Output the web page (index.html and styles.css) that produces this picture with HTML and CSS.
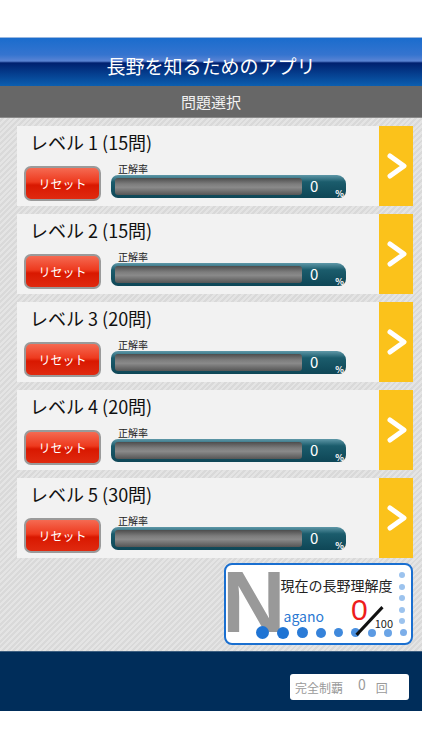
FILE: index.html
```html
<!DOCTYPE html>
<html lang="ja">
<head>
    <meta charset="UTF-8">
    <meta name="viewport" content="width=device-width, initial-scale=1.0">
    <title>長野を知るためのアプリ</title>
    <link rel="stylesheet" href="styles.css">
</head>
<body>
    <div class="status"></div>
    <header class="title-bar">長野を知るためのアプリ</header>
    <div class="sub-bar">問題選択</div>

    <main class="levels">
        <div class="level">
            <div class="level-body">
                <div class="level-name">レベル 1 (15問)</div>
                <button class="reset">リセット</button>
                <div class="rate">
                    <span class="rate-label">正解率</span>
                    <div class="meter">
                        <div class="track"></div>
                        <div class="value">0<small>%</small></div>
                    </div>
                </div>
            </div>
            <a class="go" href="#"><svg width="20" height="26" viewBox="0 0 20 26"><polyline points="3,3 17,13 3,23" fill="none" stroke="#fff" stroke-width="5" stroke-linecap="round" stroke-linejoin="round"/></svg></a>
        </div>
        <div class="level">
            <div class="level-body">
                <div class="level-name">レベル 2 (15問)</div>
                <button class="reset">リセット</button>
                <div class="rate">
                    <span class="rate-label">正解率</span>
                    <div class="meter">
                        <div class="track"></div>
                        <div class="value">0<small>%</small></div>
                    </div>
                </div>
            </div>
            <a class="go" href="#"><svg width="20" height="26" viewBox="0 0 20 26"><polyline points="3,3 17,13 3,23" fill="none" stroke="#fff" stroke-width="5" stroke-linecap="round" stroke-linejoin="round"/></svg></a>
        </div>
        <div class="level">
            <div class="level-body">
                <div class="level-name">レベル 3 (20問)</div>
                <button class="reset">リセット</button>
                <div class="rate">
                    <span class="rate-label">正解率</span>
                    <div class="meter">
                        <div class="track"></div>
                        <div class="value">0<small>%</small></div>
                    </div>
                </div>
            </div>
            <a class="go" href="#"><svg width="20" height="26" viewBox="0 0 20 26"><polyline points="3,3 17,13 3,23" fill="none" stroke="#fff" stroke-width="5" stroke-linecap="round" stroke-linejoin="round"/></svg></a>
        </div>
        <div class="level">
            <div class="level-body">
                <div class="level-name">レベル 4 (20問)</div>
                <button class="reset">リセット</button>
                <div class="rate">
                    <span class="rate-label">正解率</span>
                    <div class="meter">
                        <div class="track"></div>
                        <div class="value">0<small>%</small></div>
                    </div>
                </div>
            </div>
            <a class="go" href="#"><svg width="20" height="26" viewBox="0 0 20 26"><polyline points="3,3 17,13 3,23" fill="none" stroke="#fff" stroke-width="5" stroke-linecap="round" stroke-linejoin="round"/></svg></a>
        </div>
        <div class="level">
            <div class="level-body">
                <div class="level-name">レベル 5 (30問)</div>
                <button class="reset">リセット</button>
                <div class="rate">
                    <span class="rate-label">正解率</span>
                    <div class="meter">
                        <div class="track"></div>
                        <div class="value">0<small>%</small></div>
                    </div>
                </div>
            </div>
            <a class="go" href="#"><svg width="20" height="26" viewBox="0 0 20 26"><polyline points="3,3 17,13 3,23" fill="none" stroke="#fff" stroke-width="5" stroke-linecap="round" stroke-linejoin="round"/></svg></a>
        </div>

        <div class="score">
            <div class="big-n">N</div>
            <div class="score-main">
                <div class="score-title">現在の長野理解度</div>
                <div class="score-row">
                    <span class="agano">agano</span>
                    <span class="now">0</span>
                    <span class="slash"></span>
                    <span class="max">100</span>
                </div>
            </div>
            <div class="dots-col">
                <i></i><i></i><i></i><i></i><i></i>
            </div>
            <div class="dots-row">
                <i class="d1"></i><i class="d2"></i><i class="d3"></i><i class="d4"></i><i class="d5"></i><i class="d6"></i><i class="d7"></i><i class="d8"></i><i class="d9"></i>
            </div>
        </div>
    </main>

    <footer class="bottom">
        <div class="clear-box">
            <span class="clear-label">完全制覇</span>
            <span class="clear-count">0</span>
            <span class="clear-unit">回</span>
        </div>
    </footer>
</body>
</html>
```

FILE: styles.css
```css
body {
    font-family: "Noto Sans CJK JP", "Noto Sans", sans-serif;
    background-color: #ffffff;
    margin: 0;
    padding: 0;
}
.status {
    height: 37px;
    background: #ffffff;
}
.title-bar {
    height: 49px;
    box-sizing: border-box;
    padding-top: 16px;
    text-align: center;
    color: #ffffff;
    font-size: 19px;
    line-height: 24px;
    background: linear-gradient(to bottom, #1a6ccd 0%, #3574cf 35%, #5a84d4 48%, #00206f 52%, #053f8f 75%, #0c5fb0 100%);
    border-top: 1px solid #9ab8e0;
}
.sub-bar {
    height: 31px;
    background-color: #676767;
    color: #f2f2f2;
    text-align: center;
    font-size: 15px;
    line-height: 31px;
    border-bottom: 1px solid #8a8a8a;
}
.levels {
    display: flex;
    flex-direction: column;
    gap: 8px;
    padding: 8px 9px 6px 17px;
    background: repeating-linear-gradient(-45deg, #d9d9d9 0px, #d9d9d9 2px, #e4e4e4 2px, #e4e4e4 4px);
}
.level {
    display: flex;
    height: 80px;
}
.level-body {
    flex: 1;
    background-color: #f2f2f2;
    display: grid;
    grid-template-columns: 87px 1fr;
    grid-template-rows: 40px 35px;
    padding-left: 7px;
}
.level-name {
    grid-column: 1 / 3;
    font-size: 18px;
    line-height: 22px;
    padding: 5px 0 0 6px;
    color: #111111;
}
.reset {
    width: 77px;
    height: 35px;
    border: 2px solid #9a9a9a;
    border-radius: 7px;
    background: linear-gradient(to bottom, #f56a52 0%, #ee3a1e 45%, #d91800 55%, #e02a10 100%);
    color: #ffffff;
    font-family: inherit;
    font-size: 12px;
    padding: 0;
}
.rate {
    display: flex;
    flex-direction: column;
}
.rate-label {
    font-size: 10px;
    line-height: 12px;
    margin: -3px 0 0 7px;
    color: #222222;
}
.meter {
    display: flex;
    width: 235px;
    height: 23px;
    box-sizing: border-box;
    border-radius: 7px 9px 7px 7px;
    background: linear-gradient(to bottom, #5f98a8 0%, #1b5c6c 30%, #0e4656 100%);
    padding: 3px 0 3px 4px;
}
.track {
    width: 187px;
    border-radius: 3px;
    background: linear-gradient(to bottom, #4d4d4d 0%, #7c7c7c 35%, #8a8a8a 55%, #555555 100%);
}
.value {
    flex: 1;
    color: #ffffff;
    font-size: 15px;
    line-height: 15px;
    text-align: right;
    padding-right: 2px;
}
.value small {
    font-size: 9px;
    font-weight: bold;
    margin-left: 17px;
    vertical-align: -5px;
}
.go {
    width: 34px;
    background-color: #fbc21b;
    display: flex;
    align-items: center;
    justify-content: center;
}
.go svg {
    margin-left: 2px;
}
.score {
    align-self: flex-end;
    margin-top: -3px;
    width: 189px;
    height: 82px;
    box-sizing: border-box;
    border: 2px solid #1a6fd0;
    border-radius: 8px;
    background-color: #ffffff;
    display: grid;
    grid-template-columns: auto 1fr 10px;
    grid-template-rows: 1fr 14px;
    padding-right: 4px;
}
.big-n {
    grid-row: 1 / 3;
    grid-column: 1;
    font-family: "Liberation Sans", Arial, sans-serif;
    font-weight: bold;
    font-size: 88px;
    line-height: 70px;
    height: 70px;
    color: #999999;
    margin: 2px -5px 0 -4px;
}
.score-main {
    grid-column: 2;
    grid-row: 1;
}
.score-title {
    font-size: 14px;
    line-height: 18px;
    margin-top: 11px;
    color: #222222;
    white-space: nowrap;
}
.score-row {
    display: flex;
    align-items: flex-end;
    height: 36px;
}
.agano {
    color: #2a78d2;
    font-size: 14px;
    line-height: 16px;
    margin-left: 3px;
    margin-bottom: 6px;
}
.now {
    color: #ee1c1c;
    font-family: "Liberation Sans", Arial, sans-serif;
    font-size: 30px;
    line-height: 30px;
    margin-left: 27px;
    margin-bottom: 5px;
}
.slash {
    width: 3px;
    height: 38px;
    background-color: #111111;
    transform: rotate(43deg);
    margin: 0 4px -10px 0;
}
.max {
    font-size: 11px;
    line-height: 12px;
    margin-bottom: 1px;
    color: #222222;
}
.dots-col {
    grid-column: 3;
    grid-row: 1;
    display: flex;
    flex-direction: column;
    align-items: center;
    gap: 5.5px;
    padding-top: 7px;
}
.dots-col i {
    width: 6px;
    height: 6px;
    border-radius: 50%;
    background-color: #9cc3ee;
}
.dots-row {
    grid-column: 1 / 4;
    grid-row: 2;
    display: flex;
    align-items: center;
    gap: 8px;
    padding-left: 30px;
    margin-top: -9px;
}
.dots-row i {
    border-radius: 50%;
    background-color: #1f74d4;
}
.dots-row .d1 { width: 13px; height: 13px; }
.dots-row .d2 { width: 12px; height: 12px; }
.dots-row .d3 { width: 11px; height: 11px; background-color: #2a7bd7; }
.dots-row .d4 { width: 10px; height: 10px; background-color: #3582da; }
.dots-row .d5 { width: 9px; height: 9px; background-color: #3f89dc; }
.dots-row .d6 { width: 9px; height: 9px; background-color: #4a90e0; }
.dots-row .d7 { width: 8px; height: 8px; background-color: #5b9ae3; }
.dots-row .d8 { width: 8px; height: 8px; background-color: #6aa4e6; }
.dots-row .d9 { width: 7px; height: 7px; background-color: #7caee9; }
.bottom {
    height: 60px;
    background-color: #002d5a;
    border-top: 1px solid #3e5f80;
    display: flex;
    justify-content: flex-end;
    align-items: flex-end;
    padding: 0 13px 11px 0;
    box-sizing: border-box;
}
.clear-box {
    width: 119px;
    height: 26px;
    background-color: #ffffff;
    border-radius: 3px;
    display: flex;
    align-items: center;
    color: #9a9a9a;
    font-size: 12px;
}
.clear-label {
    margin-left: 5px;
}
.clear-count {
    margin-left: 15px;
    font-size: 14px;
    margin-top: -6px;
}
.clear-unit {
    margin-left: 10px;
}
```
